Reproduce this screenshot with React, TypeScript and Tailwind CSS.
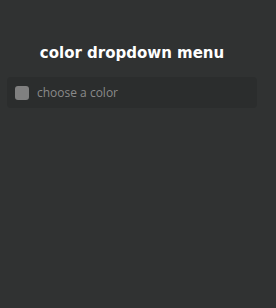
export default function App() {
  return (
    <div className="min-h-[308px] w-[276px] bg-[#303232] pt-[41px] pl-[7px] font-['Open_Sans',sans-serif]">
      <div className="w-[250px]">
        <h1 className="text-center font-['DejaVu_Sans',sans-serif] text-[15px] font-bold leading-[24px] text-white">
          color dropdown menu
        </h1>
        <div className="mt-[12px] flex h-[31px] items-center gap-[8px] rounded-[4px] bg-[#2b2d2d] px-[8px]">
          <span className="h-[14px] w-[14px] rounded-[3px] bg-[#808080]" />
          <span className="text-[12px] text-[#8a8a8a]">choose a color</span>
        </div>
      </div>
    </div>
  );
}
